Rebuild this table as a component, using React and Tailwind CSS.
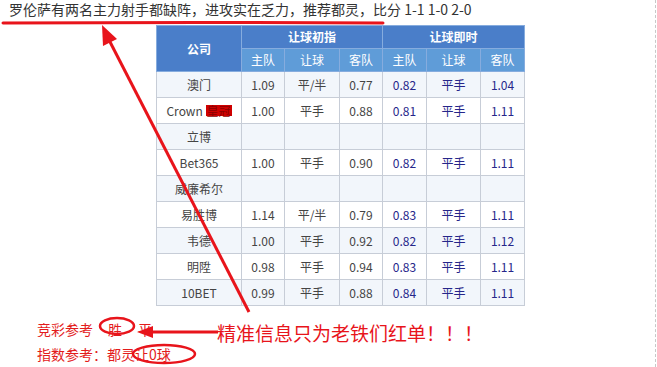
import React from "react";

const rows = [
  ["澳门", "1.09", "平/半", "0.77", "0.82", "平手", "1.04"],
  ["Crown", "1.00", "平手", "0.88", "0.81", "平手", "1.11"],
  ["立博", "", "", "", "", "", ""],
  ["Bet365", "1.00", "平手", "0.90", "0.82", "平手", "1.11"],
  ["威廉希尔", "", "", "", "", "", ""],
  ["易胜博", "1.14", "平/半", "0.79", "0.83", "平手", "1.11"],
  ["韦德", "1.00", "平手", "0.92", "0.82", "平手", "1.12"],
  ["明陞", "0.98", "平手", "0.94", "0.83", "平手", "1.11"],
  ["10BET", "0.99", "平手", "0.88", "0.84", "平手", "1.11"],
];

const font = { fontFamily: '"Noto Sans CJK SC", "Noto Sans", sans-serif' };

export default function App() {
  return (
    <div
      className="relative w-[656px] h-[367px] bg-white border-r border-dashed border-[#c8c8c8] overflow-hidden"
      style={font}
    >
      <div className="pl-[9px] text-[14px] leading-[18px] text-[#333] whitespace-nowrap">
        罗伦萨有两名主力射手都缺阵，进攻实在乏力，推荐都灵，比分 1-1 1-0 2-0
      </div>

      <table className="ml-[156px] mt-[7px] table-fixed w-[368px] border-collapse text-[12px] text-center">
        <colgroup>
          <col className="w-[85px]" />
          <col className="w-[43px]" />
          <col className="w-[55px]" />
          <col className="w-[43px]" />
          <col className="w-[44px]" />
          <col className="w-[54px]" />
          <col className="w-[44px]" />
        </colgroup>
        <thead>
          <tr className="h-[23px]">
            <th
              rowSpan={2}
              className="bg-[#4a7ec9] text-white font-bold border border-[#86acde] p-0"
            >
              公司
            </th>
            <th colSpan={3} className="bg-[#4a7ec9] text-white font-bold border border-[#86acde] p-0">
              让球初指
            </th>
            <th colSpan={3} className="bg-[#4a7ec9] text-white font-bold border border-[#86acde] p-0">
              让球即时
            </th>
          </tr>
          <tr className="h-[23px]">
            {["主队", "让球", "客队", "主队", "让球", "客队"].map((t, i) => (
              <th
                key={i}
                className="bg-[#5f9cd8] text-white font-normal border border-[#86acde] p-0"
              >
                {t}
              </th>
            ))}
          </tr>
        </thead>
        <tbody>
          {rows.map((r, i) => (
            <tr key={i} className={i % 2 === 0 ? "h-[26px] bg-[#f2f6fb]" : "h-[26px] bg-white"}>
              {r.map((c, j) => (
                <td
                  key={j}
                  className={
                    j >= 4
                      ? "border border-[#c7cdd7] p-0 text-[#26268a]"
                      : "border border-[#c7cdd7] p-0 text-[#444]"
                  }
                >
                  {j === 0 && c === "Crown" ? (
                    <span>
                      Crown{" "}
                      <span className="inline-block bg-[#d00000] text-[#8a0000] leading-[11px] px-[1px]">
                        皇冠
                      </span>
                    </span>
                  ) : (
                    c
                  )}
                </td>
              ))}
            </tr>
          ))}
        </tbody>
      </table>

      <div className="mt-[11px] pl-[37px] text-[14px] leading-[25px] text-[#e31b1b] whitespace-nowrap">
        <div>
          竞彩参考<span className="ml-[15px]">胜</span>
          <span className="ml-[16px]">平</span>
        </div>
        <div>指数参考：都灵让0球</div>
      </div>

      <div className="absolute left-[217px] top-[320px] text-[19px] leading-[26px] text-[#e8141b] whitespace-nowrap">
        精准信息只为老铁们红单！！！
      </div>

      <svg
        className="absolute inset-0 pointer-events-none"
        width="657"
        height="367"
        viewBox="0 0 657 367"
      >
        <path
          d="M3 23 Q 200 22 383 23"
          stroke="#e8141b"
          strokeWidth="3"
          fill="none"
          strokeLinecap="round"
        />
        <line x1="108" y1="38" x2="249" y2="312" stroke="#e8141b" strokeWidth="3" />
        <polygon points="102,25 117,39 103,46" fill="#e8141b" />
        <line x1="150" y1="332" x2="218" y2="332" stroke="#e8141b" strokeWidth="3" />
        <polygon points="137,332 153,326 153,338" fill="#e8141b" />
        <ellipse cx="117" cy="326" rx="17" ry="8" stroke="#e8141b" strokeWidth="2.5" fill="none" />
        <ellipse cx="164" cy="354" rx="31" ry="9" stroke="#e8141b" strokeWidth="2.5" fill="none" />
      </svg>
    </div>
  );
}
